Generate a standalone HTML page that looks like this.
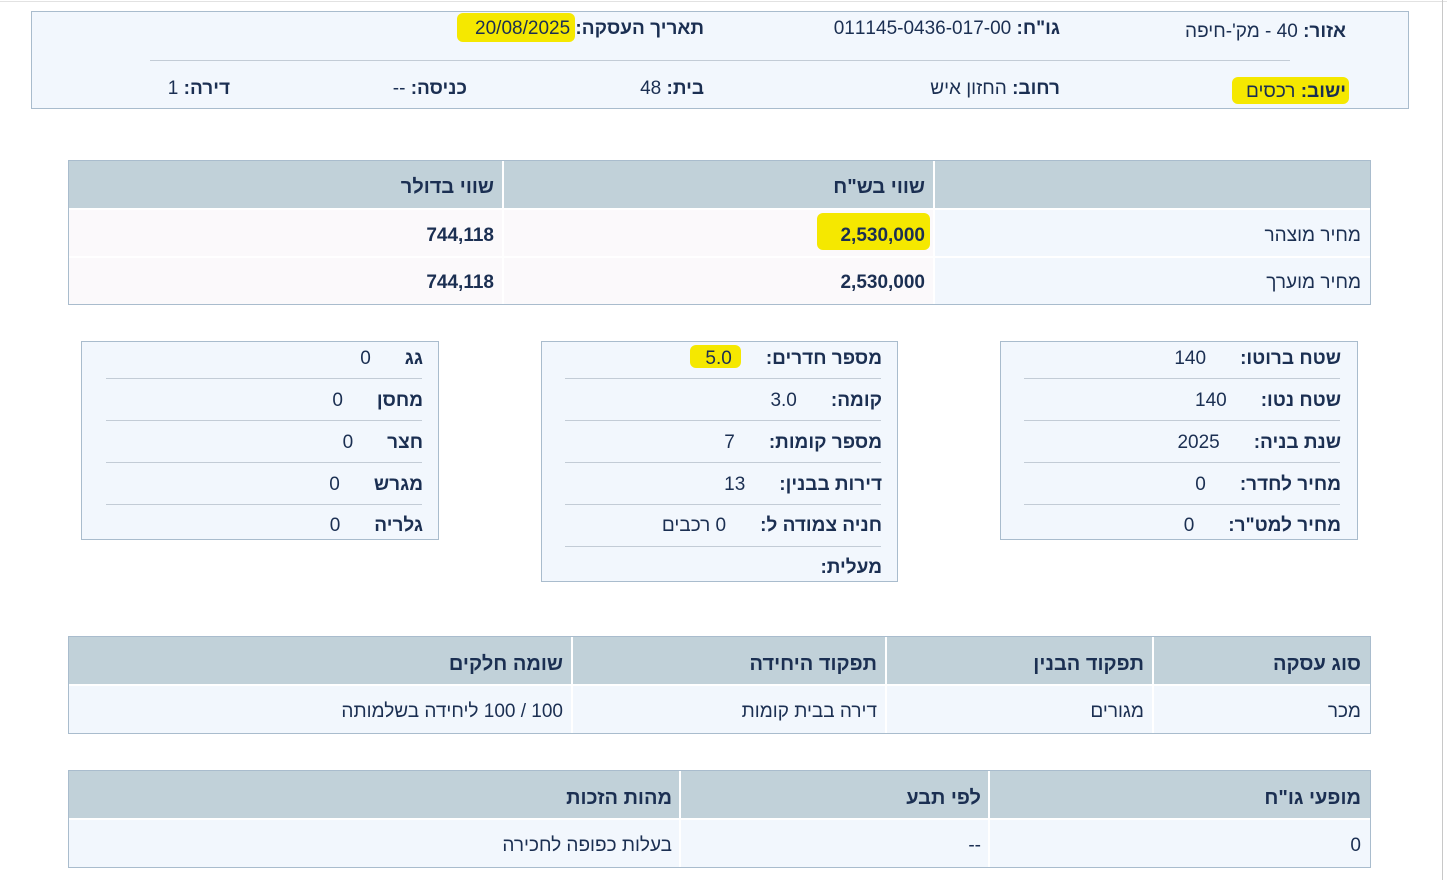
<!DOCTYPE html>
<html><head><meta charset="utf-8"><style>
*{margin:0;padding:0;box-sizing:border-box}
body{width:1447px;height:880px;background:#fff;position:relative;overflow:hidden;font-family:"Liberation Sans","DejaVu Sans",sans-serif;color:#1b2f52;font-size:19px}
.a{position:absolute;white-space:nowrap;line-height:24px;direction:rtl;margin-top:2px}
b{font-weight:bold}
.box{position:absolute;background:#f2f7fd;border:1px solid #a9bccd}
.hl{position:absolute;background:#f5e800;border-radius:6px}
.ln{position:absolute;height:1px;background:#c3ccd6}
.c{position:absolute;}
.h{background:#c1d1d9}
.p{background:#fbf9fb}
.q{background:#f2f7fd}
.tb{position:absolute;border:1px solid #a9bccd;background:#fff}
</style></head><body>
<div style="position:absolute;left:0;top:1px;width:1447px;height:1px;background:#e2e2e2"></div>
<div style="position:absolute;left:1442px;top:0;width:1px;height:880px;background:#c8c8c8"></div>

<div class="box" style="left:31px;top:11px;width:1378px;height:98px"></div>
<div class="hl" style="left:457px;top:13px;width:118px;height:29px"></div>
<div class="hl" style="left:1232px;top:77px;width:117px;height:27px"></div>
<div class="ln" style="left:150px;top:60px;width:1140px;background:#c3ccd6"></div>
<div class="a" style="right:101px;top:18px"><b>אזור:</b> 40 - מק'-חיפה</div>
<div class="a" style="right:387px;top:15px"><b>גו"ח:</b> 011145-0436-017-00</div>
<div class="a" style="right:743px;top:15px"><b>תאריך העסקה:</b> 20/08/2025</div>
<div class="a" style="right:101px;top:78px"><b>ישוב:</b> רכסים</div>
<div class="a" style="right:387px;top:75px"><b>רחוב:</b> החזון איש</div>
<div class="a" style="right:743px;top:75px"><b>בית:</b> 48</div>
<div class="a" style="right:980px;top:75px"><b>כניסה:</b> --</div>
<div class="a" style="right:1217px;top:75px"><b>דירה:</b> 1</div>

<div class="tb" style="left:68px;top:160px;width:1303px;height:145px"></div>
<div class="c h" style="left:69px;top:161px;width:433px;height:47px"></div>
<div class="c h" style="left:504px;top:161px;width:429px;height:47px"></div>
<div class="c h" style="left:935px;top:161px;width:435px;height:47px"></div>
<div class="c p" style="left:69px;top:210px;width:433px;height:46px"></div>
<div class="c p" style="left:504px;top:210px;width:429px;height:46px"></div>
<div class="c q" style="left:935px;top:210px;width:435px;height:46px"></div>
<div class="c p" style="left:69px;top:258px;width:433px;height:46px"></div>
<div class="c p" style="left:504px;top:258px;width:429px;height:46px"></div>
<div class="c q" style="left:935px;top:258px;width:435px;height:46px"></div>
<div class="hl" style="left:817px;top:213px;width:113px;height:37px"></div>
<div class="a" style="right:953px;top:173px;font-size:20px"><b>שווי בדולר</b></div>
<div class="a" style="right:522px;top:173px;font-size:20px"><b>שווי בש"ח</b></div>
<div class="a" style="right:86px;top:222px">מחיר מוצהר</div>
<div class="a" style="right:522px;top:222px"><b>2,530,000</b></div>
<div class="a" style="right:953px;top:222px"><b>744,118</b></div>
<div class="a" style="right:86px;top:269px">מחיר מוערך</div>
<div class="a" style="right:522px;top:269px"><b>2,530,000</b></div>
<div class="a" style="right:953px;top:269px"><b>744,118</b></div>

<div class="box" style="left:1000px;top:341px;width:358px;height:199px"></div>
<div class="box" style="left:541px;top:341px;width:357px;height:241px"></div>
<div class="box" style="left:81px;top:341px;width:358px;height:199px"></div>
<div class="hl" style="left:690px;top:345px;width:51px;height:23px"></div>

<div class="ln" style="left:1024px;top:378px;width:316px"></div>
<div class="ln" style="left:1024px;top:420px;width:316px"></div>
<div class="ln" style="left:1024px;top:462px;width:316px"></div>
<div class="ln" style="left:1024px;top:504px;width:316px"></div>
<div class="ln" style="left:565px;top:378px;width:316px"></div>
<div class="ln" style="left:565px;top:420px;width:316px"></div>
<div class="ln" style="left:565px;top:462px;width:316px"></div>
<div class="ln" style="left:565px;top:504px;width:316px"></div>
<div class="ln" style="left:565px;top:546px;width:316px"></div>
<div class="ln" style="left:106px;top:378px;width:316px"></div>
<div class="ln" style="left:106px;top:420px;width:316px"></div>
<div class="ln" style="left:106px;top:462px;width:316px"></div>
<div class="ln" style="left:106px;top:504px;width:316px"></div>

<div class="a" style="right:106px;top:345px"><b>שטח ברוטו:</b><span style="margin-right:34px">140</span></div>
<div class="a" style="right:106px;top:387px"><b>שטח נטו:</b><span style="margin-right:34px">140</span></div>
<div class="a" style="right:106px;top:429px"><b>שנת בניה:</b><span style="margin-right:34px">2025</span></div>
<div class="a" style="right:106px;top:471px"><b>מחיר לחדר:</b><span style="margin-right:34px">0</span></div>
<div class="a" style="right:106px;top:512px"><b>מחיר למט"ר:</b><span style="margin-right:34px">0</span></div>

<div class="a" style="right:565px;top:345px"><b>מספר חדרים:</b><span style="margin-right:34px">5.0</span></div>
<div class="a" style="right:565px;top:387px"><b>קומה:</b><span style="margin-right:34px">3.0</span></div>
<div class="a" style="right:565px;top:429px"><b>מספר קומות:</b><span style="margin-right:34px">7</span></div>
<div class="a" style="right:565px;top:471px"><b>דירות בבנין:</b><span style="margin-right:34px">13</span></div>
<div class="a" style="right:565px;top:512px"><b>חניה צמודה ל:</b><span style="margin-right:34px">0 רכבים</span></div>
<div class="a" style="right:565px;top:554px"><b>מעלית:</b></div>

<div class="a" style="right:1024px;top:345px"><b>גג</b><span style="margin-right:34px">0</span></div>
<div class="a" style="right:1024px;top:387px"><b>מחסן</b><span style="margin-right:34px">0</span></div>
<div class="a" style="right:1024px;top:429px"><b>חצר</b><span style="margin-right:34px">0</span></div>
<div class="a" style="right:1024px;top:471px"><b>מגרש</b><span style="margin-right:34px">0</span></div>
<div class="a" style="right:1024px;top:512px"><b>גלריה</b><span style="margin-right:34px">0</span></div>

<div class="tb" style="left:68px;top:636px;width:1303px;height:98px"></div>
<div class="c h" style="left:69px;top:637px;width:502px;height:47px"></div>
<div class="c h" style="left:573px;top:637px;width:312px;height:47px"></div>
<div class="c h" style="left:887px;top:637px;width:265px;height:47px"></div>
<div class="c h" style="left:1154px;top:637px;width:216px;height:47px"></div>
<div class="c q" style="left:69px;top:686px;width:502px;height:47px"></div>
<div class="c q" style="left:573px;top:686px;width:312px;height:47px"></div>
<div class="c q" style="left:887px;top:686px;width:265px;height:47px"></div>
<div class="c q" style="left:1154px;top:686px;width:216px;height:47px"></div>
<div class="a" style="right:86px;top:650px;font-size:20px"><b>סוג עסקה</b></div>
<div class="a" style="right:303px;top:650px;font-size:20px"><b>תפקוד הבנין</b></div>
<div class="a" style="right:570px;top:650px;font-size:20px"><b>תפקוד היחידה</b></div>
<div class="a" style="right:884px;top:650px;font-size:20px"><b>שומה חלקים</b></div>
<div class="a" style="right:86px;top:698px">מכר</div>
<div class="a" style="right:303px;top:698px">מגורים</div>
<div class="a" style="right:570px;top:698px">דירה בבית קומות</div>
<div class="a" style="right:884px;top:698px">100 / 100 ליחידה בשלמותה</div>

<div class="tb" style="left:68px;top:770px;width:1303px;height:98px"></div>
<div class="c h" style="left:69px;top:771px;width:610px;height:47px"></div>
<div class="c h" style="left:681px;top:771px;width:307px;height:47px"></div>
<div class="c h" style="left:990px;top:771px;width:380px;height:47px"></div>
<div class="c q" style="left:69px;top:820px;width:610px;height:47px"></div>
<div class="c q" style="left:681px;top:820px;width:307px;height:47px"></div>
<div class="c q" style="left:990px;top:820px;width:380px;height:47px"></div>
<div class="a" style="right:86px;top:784px;font-size:20px"><b>מופעי גו"ח</b></div>
<div class="a" style="right:466px;top:784px;font-size:20px"><b>לפי תבע</b></div>
<div class="a" style="right:775px;top:784px;font-size:20px"><b>מהות הזכות</b></div>
<div class="a" style="right:86px;top:832px">0</div>
<div class="a" style="right:466px;top:832px">--</div>
<div class="a" style="right:775px;top:832px">בעלות כפופה לחכירה</div>
</body></html>
